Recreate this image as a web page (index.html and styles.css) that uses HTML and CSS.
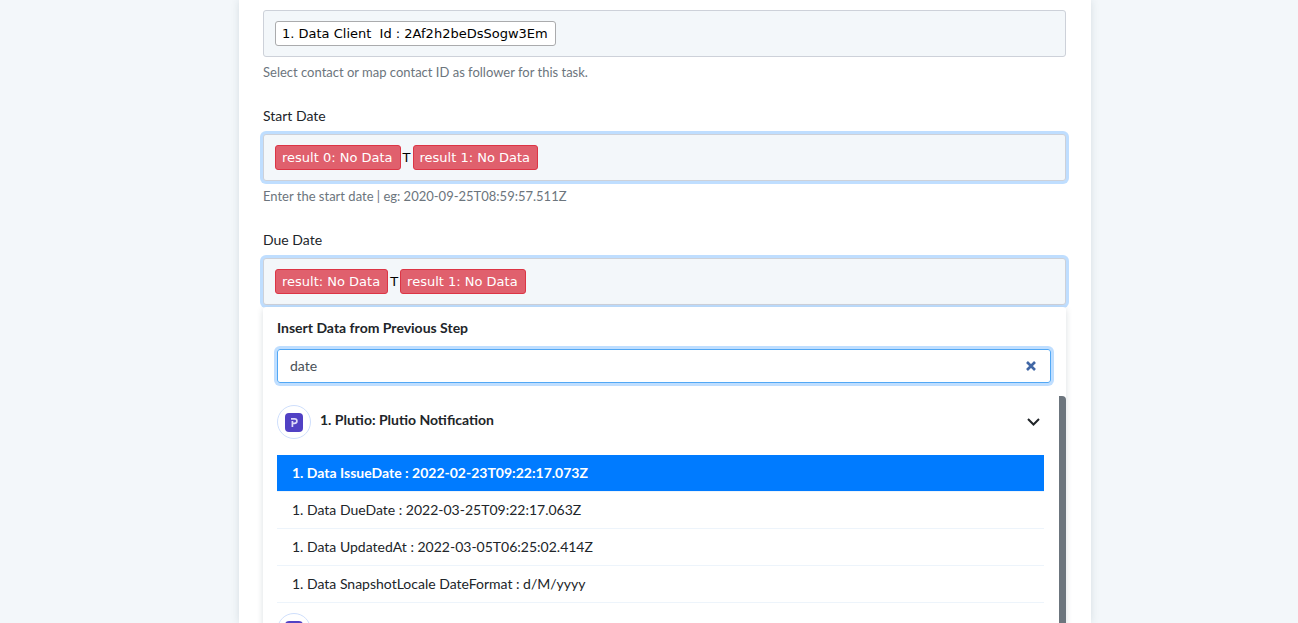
FILE: index.html
```
<!DOCTYPE html>
<html lang="en">
<head>
<meta charset="utf-8">
<meta name="viewport" content="width=device-width, initial-scale=1">
<title>Task follow-up mapping</title>
<link rel="stylesheet" href="styles.css">
</head>
<body>
<main class="page">
  <form class="card">
    <div class="group">
      <div class="field" role="textbox" aria-label="Follower" tabindex="0"><span class="chip">1. Data Client&nbsp; Id : 2Af2h2beDsSogw3Em</span></div>
      <p class="help">Select contact or map contact ID as follower for this task.</p>
    </div>
    <div class="group">
      <span class="label" id="start-label">Start Date</span>
      <div class="field field-focus" role="textbox" aria-labelledby="start-label" tabindex="0"><span class="chip chip-missing">result 0: No Data</span><span class="plain">T</span><span class="chip chip-missing">result 1: No Data</span></div>
      <p class="help">Enter the start date | eg: 2020-09-25T08:59:57.511Z</p>
    </div>
    <div class="group group-open">
      <span class="label" id="due-label">Due Date</span>
      <div class="field field-focus" role="textbox" aria-labelledby="due-label" tabindex="0"><span class="chip chip-missing">result: No Data</span><span class="plain">T</span><span class="chip chip-missing">result 1: No Data</span></div>
      <div class="menu">
        <label class="menu-title" for="search">Insert Data from Previous Step</label>
        <div class="search">
          <input class="search-input" id="search" type="text" value="date">
          <button class="clear" type="button" aria-label="Clear search">
            <svg width="10" height="10" viewBox="0 0 10 10" fill="none" stroke="#4167a5" stroke-width="2.6"><path d="M1 1l8 8M9 1L1 9"/></svg>
          </button>
        </div>
        <div class="results">
          <button class="step" type="button">
            <span class="step-icon"><svg width="18" height="19" viewBox="0 0 18 19"><rect width="18" height="19" rx="4" fill="#5141c4"/><path d="M6 5.800h3.600a2.300 2.300 0 0 1 0 4.600H7.400M7.400 8v6" fill="none" stroke="#dedaf8" stroke-width="1.700"/></svg></span>
            <span class="step-name">1. Plutio: Plutio Notification</span>
            <svg class="chevron" width="13" height="8" viewBox="0 0 13 8" fill="none" stroke="#212529" stroke-width="2"><path d="M1 1l5.500 5.500L12 1"/></svg>
          </button>
          <ul class="options">
            <li><button class="option option-active" type="button">1. Data IssueDate : 2022-02-23T09:22:17.073Z</button></li>
            <li><button class="option" type="button">1. Data DueDate : 2022-03-25T09:22:17.063Z</button></li>
            <li><button class="option" type="button">1. Data UpdatedAt : 2022-03-05T06:25:02.414Z</button></li>
            <li><button class="option" type="button">1. Data SnapshotLocale DateFormat : d/M/yyyy</button></li>
          </ul>
          <button class="step step-collapsed" type="button">
            <span class="step-icon"><svg width="18" height="19" viewBox="0 0 18 19"><rect width="18" height="19" rx="4" fill="#5141c4"/></svg></span>
            <span class="step-name">2. Plutio: Plutio Notification</span>
          </button>
        </div>
      </div>
    </div>
  </form>
</main>
</body>
</html>
```
FILE: styles.css
```
* { box-sizing: border-box; }
body {
  margin: 0;
  background: #f3f7fa;
  color: #212529;
  font-family: Lato, "Open Sans", sans-serif;
  font-size: 14px;
  line-height: 20px;
}
button, input { font: inherit; color: inherit; }
.page {
  height: 100vh;
  overflow: hidden;
  padding: 0 207px 0 239px;
}
.card {
  min-height: 100vh;
  padding: 10px 25px 24px 24px;
  background: #fff;
  box-shadow: 0 0 8px rgba(33, 60, 80, .13);
}
.group { margin-bottom: 24px; }
.group-open { position: relative; }
.label {
  display: block;
  margin-bottom: 8px;
}
.field {
  display: flex;
  align-items: center;
  min-height: 47px;
  padding: 10px 11px;
  border: 1px solid #cdd1d9;
  border-radius: 3px;
  background: #f3f7fa;
  font-family: Verdana, "DejaVu Sans", sans-serif;
  font-size: 13px;
  line-height: 19px;
  color: #000;
}
.field-focus { box-shadow: 0 0 0 3px #bfdeff; }
.chip {
  padding: 2px 7px 2px 6px;
  border: 1px solid #aaabad;
  border-radius: 3px;
  background: #fff;
}
.chip-missing {
  border-color: #dc3545;
  background: #e0606d;
  color: #fff;
}
.plain { padding: 0 2px; }
.help {
  margin: 5px 0 0;
  color: #6c757d;
  font-size: 13px;
}
.menu {
  position: absolute;
  top: 100%;
  left: 0;
  right: 0;
  margin-top: 2px;
  padding: 11px 0 0 14px;
  border-radius: 3px;
  background: #fff;
  box-shadow: 0 2px 6px rgba(33, 60, 80, .17);
}
.menu-title {
  display: block;
  margin-bottom: 11px;
  font-weight: 700;
}
.search {
  display: flex;
  align-items: center;
  height: 34px;
  margin-right: 15px;
  border: 1px solid #52a8f5;
  border-radius: 3px;
  box-shadow: 0 0 0 3px #bfdeff;
}
.search-input {
  flex: 1;
  min-width: 0;
  padding: 0 12px;
  border: 0;
  outline: 0;
  background: none;
  color: #495057;
}
.clear {
  display: flex;
  margin-right: 14px;
  padding: 0;
  border: 0;
  background: none;
}
.results {
  margin-top: 13px;
  padding-right: 15px;
  border-right: 7px solid #6c757d;
  border-top-right-radius: 4px;
}
.step {
  display: flex;
  align-items: center;
  gap: 9px;
  width: 100%;
  padding: 9px 4px 16px 0;
  border: 0;
  background: none;
  font-weight: 700;
  text-align: left;
}
.step-icon {
  display: flex;
  align-items: center;
  justify-content: center;
  width: 34px;
  height: 34px;
  border: 1px solid #cfdffc;
  border-radius: 50%;
}
.step-name { flex: 1; padding-bottom: 4px; }
.step-collapsed .step-name { padding-bottom: 0; }
.options {
  margin: 0 0 1px;
  padding: 0;
  list-style: none;
}
.option {
  display: block;
  width: 100%;
  height: 37px;
  padding: 0 15px;
  border: 0;
  border-bottom: 1px solid #edf4fb;
  background: none;
  text-align: left;
}
.option-active {
  background: #007bff;
  background-clip: padding-box;
  color: #fff;
  font-weight: 700;
}
```
